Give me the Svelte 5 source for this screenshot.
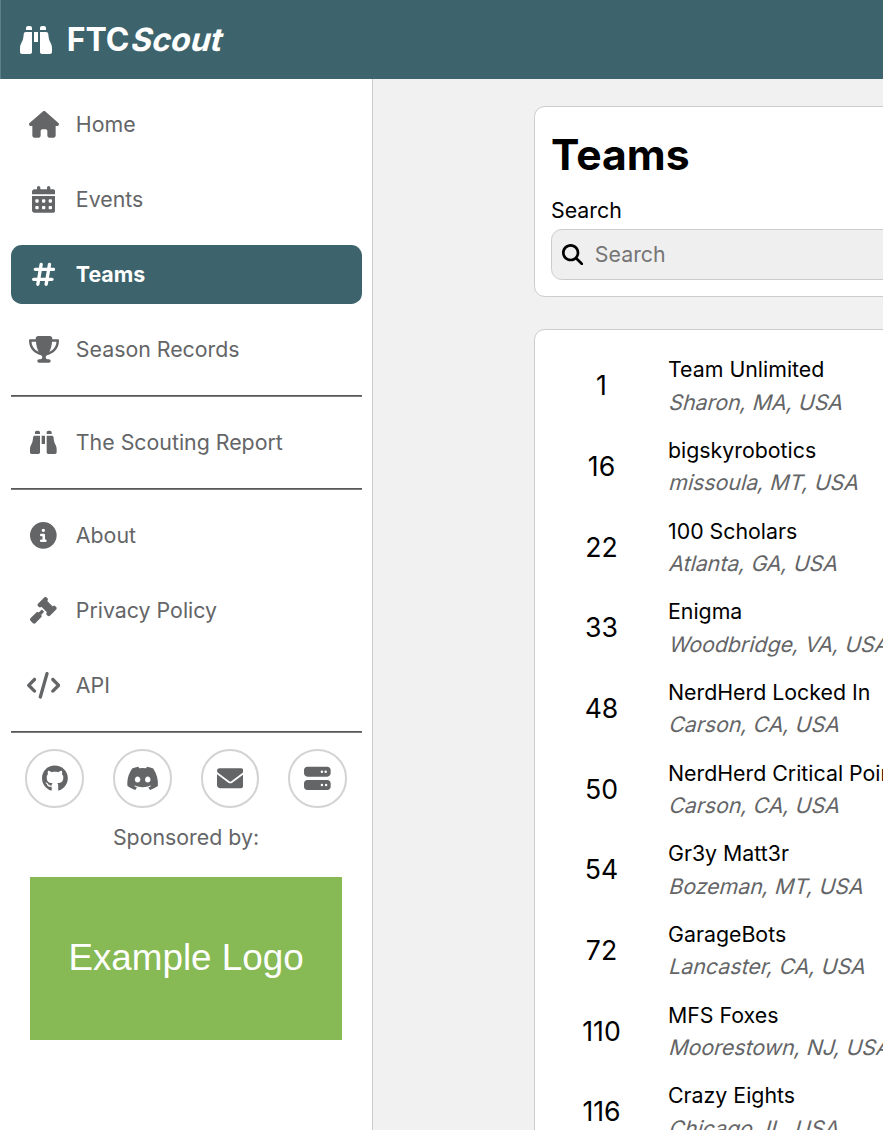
<script>
  const icons = {
    home: [576, 'M575.8 255.5c0 18-15 32.1-32 32.1h-32l.7 160.2c0 2.7-.2 5.4-.5 8.1V472c0 22.1-17.9 40-40 40H456c-1.1 0-2.2 0-3.3-.1c-1.4 .1-2.8 .1-4.2 .1H416 392c-22.1 0-40-17.9-40-40V448 384c0-17.7-14.3-32-32-32H256c-17.7 0-32 14.3-32 32v64 24c0 22.1-17.9 40-40 40H160 128.1c-1.5 0-3-.1-4.5-.2c-1.2 .1-2.4 .2-3.6 .2H104c-22.1 0-40-17.9-40-40V360c0-.9 0-1.9 .1-2.8V287.6H32c-18 0-32-14-32-32.1c0-9 3-17 10-24L266.4 8c7-7 15-8 22-8s15 2 21 7L564.8 231.5c8 7 12 15 11 24z'],
    calendar: [448, 'M128 0c17.7 0 32 14.3 32 32V64H288V32c0-17.7 14.3-32 32-32s32 14.3 32 32V64h48c26.5 0 48 21.5 48 48v48H0V112C0 85.5 21.5 64 48 64H96V32c0-17.7 14.3-32 32-32zM0 192H448V464c0 26.5-21.5 48-48 48H48c-26.5 0-48-21.5-48-48V192zm64 80v32c0 8.8 7.2 16 16 16h32c8.8 0 16-7.2 16-16V272c0-8.8-7.2-16-16-16H80c-8.8 0-16 7.2-16 16zm128 0v32c0 8.8 7.2 16 16 16h32c8.8 0 16-7.2 16-16V272c0-8.8-7.2-16-16-16H208c-8.8 0-16 7.2-16 16zm144-16c-8.8 0-16 7.2-16 16v32c0 8.8 7.2 16 16 16h32c8.8 0 16-7.2 16-16V272c0-8.8-7.2-16-16-16H336zM64 400v32c0 8.8 7.2 16 16 16h32c8.8 0 16-7.2 16-16V400c0-8.8-7.2-16-16-16H80c-8.8 0-16 7.2-16 16zm144-16c-8.8 0-16 7.2-16 16v32c0 8.8 7.2 16 16 16h32c8.8 0 16-7.2 16-16V400c0-8.8-7.2-16-16-16H208zm112 16v32c0 8.8 7.2 16 16 16h32c8.8 0 16-7.2 16-16V400c0-8.8-7.2-16-16-16H336c-8.8 0-16 7.2-16 16z'],
    hashtag: [448, 'M181.3 32.4c17.4 2.9 29.2 19.4 26.3 36.8L197.8 128h95.1l11.5-69.3c2.9-17.4 19.4-29.2 36.8-26.3s29.2 19.4 26.3 36.8L357.8 128H416c17.7 0 32 14.3 32 32s-14.3 32-32 32H347.1L325.8 320H384c17.7 0 32 14.3 32 32s-14.3 32-32 32H315.1l-11.5 69.3c-2.9 17.4-19.4 29.2-36.8 26.3s-29.2-19.4-26.3-36.8l9.8-58.7H155.1l-11.5 69.3c-2.9 17.4-19.4 29.2-36.8 26.3s-29.2-19.4-26.3-36.8L90.2 384H32c-17.7 0-32-14.3-32-32s14.3-32 32-32h68.9l21.3-128H64c-17.7 0-32-14.3-32-32s14.3-32 32-32h68.9l11.5-69.3c2.9-17.4 19.4-29.2 36.8-26.3zM187.1 192L165.8 320h95.1l21.3-128H187.1z'],
    trophy: [576, 'M400 0H176c-26.5 0-48.1 21.8-47.1 48.2c.2 5.3 .4 10.6 .7 15.8H24C10.7 64 0 74.7 0 88c0 92.6 33.5 157 78.5 200.7c44.3 43.1 98.3 64.8 138.1 75.8c23.4 6.5 39.4 26 39.4 45.6c0 20.9-17 37.9-37.9 37.9H192c-17.7 0-32 14.3-32 32s14.3 32 32 32H384c17.7 0 32-14.3 32-32s-14.3-32-32-32H357.9C337 448 320 431 320 410.1c0-19.6 15.9-39.2 39.4-45.6c39.9-11 93.9-32.7 138.2-75.8C542.5 245 576 180.6 576 88c0-13.3-10.7-24-24-24H446.4c.3-5.2 .5-10.4 .7-15.8C448.1 21.8 426.5 0 400 0zM48.9 112h84.4c9.1 90.1 29.2 150.3 51.9 190.6c-24.9-11-50.8-26.5-73.2-48.3c-32-31.1-58-76-63-142.3zM464.1 254.3c-22.4 21.8-48.3 37.3-73.2 48.3c22.7-40.3 42.8-100.5 51.9-190.6h84.4c-5.1 66.3-31.1 111.2-63 142.3z'],
    binoculars: [512, 'M128 32h32c17.7 0 32 14.3 32 32V96H96V64c0-17.7 14.3-32 32-32zm64 96V448c0 17.7-14.3 32-32 32H32c-17.7 0-32-14.3-32-32V388.9c0-34.6 9.4-68.6 27.2-98.3C40.9 267.8 49.7 242.4 53 216L60.5 156c2-16 15.6-28 31.8-28H192zm227.8 0c16.1 0 29.8 12 31.8 28L459 216c3.3 26.4 12.1 51.8 25.8 74.6c17.8 29.7 27.2 63.7 27.2 98.3V448c0 17.7-14.3 32-32 32H352c-17.7 0-32-14.3-32-32V128h99.8zM320 64c0-17.7 14.3-32 32-32h32c17.7 0 32 14.3 32 32V96H320V64zm-32 64V288H224V128h64z'],
    info: [512, 'M256 512A256 256 0 1 0 256 0a256 256 0 1 0 0 512zM216 336h24V272H216c-13.3 0-24-10.7-24-24s10.7-24 24-24h48c13.3 0 24 10.7 24 24v88h8c13.3 0 24 10.7 24 24s-10.7 24-24 24H216c-13.3 0-24-10.7-24-24s10.7-24 24-24zm40-208a32 32 0 1 1 0 64 32 32 0 1 1 0-64z'],
    gavel: [512, 'M318.6 9.4c-12.5-12.5-32.8-12.5-45.3 0l-120 120c-12.5 12.5-12.5 32.8 0 45.3l16 16c12.5 12.5 32.8 12.5 45.3 0l4-4L325.4 293.4l-4 4c-12.5 12.5-12.5 32.8 0 45.3l16 16c12.5 12.5 32.8 12.5 45.3 0l120-120c12.5-12.5 12.5-32.8 0-45.3l-16-16c-12.5-12.5-32.8-12.5-45.3 0l-4 4L330.6 74.6l4-4c12.5-12.5 12.5-32.8 0-45.3l-16-16zm-152 288c-12.5-12.5-32.8-12.5-45.3 0l-112 112c-12.5 12.5-12.5 32.8 0 45.3l48 48c12.5 12.5 32.8 12.5 45.3 0l112-112c12.5-12.5 12.5-32.8 0-45.3l-1.4-1.4L272 285.3 226.7 240 168 298.7l-1.4-1.4z'],
    code: [640, 'M392.8 1.2c-17-4.9-34.7 5-39.6 22l-128 448c-4.9 17 5 34.7 22 39.6s34.7-5 39.6-22l128-448c4.9-17-5-34.7-22-39.6zm80.6 120.1c-12.5 12.5-12.5 32.8 0 45.3L562.7 256l-89.4 89.4c-12.5 12.5-12.5 32.8 0 45.3s32.8 12.5 45.3 0l112-112c12.5-12.5 12.5-32.8 0-45.3l-112-112c-12.5-12.5-32.8-12.5-45.3 0zm-306.7 0c-12.5-12.5-32.8-12.5-45.3 0l-112 112c-12.5 12.5-12.5 32.8 0 45.3l112 112c12.5 12.5 32.8 12.5 45.3 0s12.5-32.8 0-45.3L77.3 256l89.4-89.4c12.5-12.5 12.5-32.8 0-45.3z'],
    github: [496, 'M165.9 397.4c0 2-2.3 3.6-5.2 3.6-3.3.3-5.6-1.3-5.6-3.6 0-2 2.3-3.6 5.2-3.6 3-.3 5.6 1.3 5.6 3.6zm-31.1-4.5c-.7 2 1.3 4.3 4.3 4.9 2.6 1 5.6 0 6.2-2s-1.3-4.3-4.3-5.2c-2.6-.7-5.5.3-6.2 2.3zm44.2-1.7c-2.9.7-4.9 2.6-4.6 4.9.3 2 2.9 3.3 5.9 2.6 2.9-.7 4.9-2.6 4.6-4.6-.3-1.9-3-3.2-5.9-2.9zM244.8 8C106.1 8 0 113.3 0 252c0 110.9 69.8 205.8 169.5 239.2 12.8 2.3 17.3-5.6 17.3-12.1 0-6.2-.3-40.4-.3-61.4 0 0-70 15-84.7-29.8 0 0-11.4-29.1-27.8-36.6 0 0-22.9-15.7 1.6-15.4 0 0 24.9 2 38.6 25.8 21.9 38.6 58.6 27.5 72.9 20.9 2.3-16 8.8-27.1 16-33.7-55.9-6.2-112.3-14.3-112.3-110.5 0-27.5 7.6-41.3 23.6-58.9-2.6-6.5-11.1-33.3 2.6-67.9 20.9-6.5 69 27 69 27 20-5.6 41.5-8.5 62.8-8.5s42.8 2.9 62.8 8.5c0 0 48.1-33.6 69-27 13.7 34.7 5.2 61.4 2.6 67.9 16 17.7 25.8 31.5 25.8 58.9 0 96.5-58.9 104.2-114.8 110.5 9.2 7.9 17 22.9 17 46.4 0 33.7-.3 75.4-.3 83.6 0 6.5 4.6 14.4 17.3 12.1C428.2 457.8 496 362.9 496 252 496 113.3 383.5 8 244.8 8z'],
    discord: [640, 'M524.531,69.836a1.5,1.5,0,0,0-.764-.7A485.065,485.065,0,0,0,404.081,32.03a1.816,1.816,0,0,0-1.923.91,337.461,337.461,0,0,0-14.9,30.6,447.848,447.848,0,0,0-134.426,0,309.541,309.541,0,0,0-15.135-30.6,1.89,1.89,0,0,0-1.924-.91A483.689,483.689,0,0,0,116.085,69.137a1.712,1.712,0,0,0-.788.676C39.068,183.651,18.186,294.69,28.43,404.354a2.016,2.016,0,0,0,.765,1.375A487.666,487.666,0,0,0,176.02,479.918a1.9,1.9,0,0,0,2.063-.676A348.2,348.2,0,0,0,208.12,430.4a1.86,1.86,0,0,0-1.019-2.588,321.173,321.173,0,0,1-45.868-21.853,1.885,1.885,0,0,1-.185-3.126c3.082-2.309,6.166-4.711,9.109-7.137a1.819,1.819,0,0,1,1.9-.256c96.229,43.917,200.41,43.917,295.5,0a1.812,1.812,0,0,1,1.924.233c2.944,2.426,6.027,4.851,9.132,7.16a1.884,1.884,0,0,1-.162,3.126,301.407,301.407,0,0,1-45.89,21.83,1.875,1.875,0,0,0-1,2.611,391.055,391.055,0,0,0,30.014,48.815,1.864,1.864,0,0,0,2.063.7A486.048,486.048,0,0,0,610.7,405.729a1.882,1.882,0,0,0,.765-1.352C623.729,277.594,590.933,167.465,524.531,69.836ZM222.491,337.58c-28.972,0-52.844-26.587-52.844-59.239S193.056,219.1,222.491,219.1c29.665,0,53.306,26.82,52.843,59.239C275.334,310.993,251.924,337.58,222.491,337.58Zm195.38,0c-28.971,0-52.843-26.587-52.843-59.239S388.437,219.1,417.871,219.1c29.667,0,53.307,26.82,52.844,59.239C470.715,310.993,447.538,337.58,417.871,337.58Z'],
    envelope: [512, 'M48 64C21.5 64 0 85.5 0 112c0 15.1 7.1 29.3 19.2 38.4L236.8 313.6c11.4 8.5 27 8.5 38.4 0L492.8 150.4c12.1-9.1 19.2-23.3 19.2-38.4c0-26.5-21.5-48-48-48H48zM0 176V384c0 35.3 28.7 64 64 64H448c35.3 0 64-28.7 64-64V176L294.4 339.2c-22.8 17.1-54 17.1-76.8 0L0 176z'],
    server: [512, 'M64 32C28.7 32 0 60.7 0 96v64c0 35.3 28.7 64 64 64H448c35.3 0 64-28.7 64-64V96c0-35.3-28.7-64-64-64H64zm280 72a24 24 0 1 1 0 48 24 24 0 1 1 0-48zm48 24a24 24 0 1 1 48 0 24 24 0 1 1 -48 0zM64 288c-35.3 0-64 28.7-64 64v64c0 35.3 28.7 64 64 64H448c35.3 0 64-28.7 64-64V352c0-35.3-28.7-64-64-64H64zm280 72a24 24 0 1 1 0 48 24 24 0 1 1 0-48zm56 24a24 24 0 1 1 48 0 24 24 0 1 1 -48 0z'],
    search: [512, 'M416 208c0 45.9-14.9 88.3-40 122.7L502.6 457.4c12.5 12.5 12.5 32.8 0 45.3s-32.8 12.5-45.3 0L330.7 376c-34.4 25.2-76.8 40-122.7 40C93.1 416 0 322.9 0 208S93.1 0 208 0S416 93.1 416 208zM208 352a144 144 0 1 0 0-288 144 144 0 1 0 0 288z'],
  };

  const groups = [
    [
      ['home', 'Home'],
      ['calendar', 'Events'],
      ['hashtag', 'Teams', true],
      ['trophy', 'Season Records'],
    ],
    [['binoculars', 'The Scouting Report']],
    [
      ['info', 'About'],
      ['gavel', 'Privacy Policy'],
      ['code', 'API'],
    ],
  ];

  const socials = ['github', 'discord', 'envelope', 'server'];

  const teams = [
    [1, 'Team Unlimited', 'Sharon, MA, USA'],
    [16, 'bigskyrobotics', 'missoula, MT, USA'],
    [22, '100 Scholars', 'Atlanta, GA, USA'],
    [33, 'Enigma', 'Woodbridge, VA, USA'],
    [48, 'NerdHerd Locked In', 'Carson, CA, USA'],
    [50, 'NerdHerd Critical Point', 'Carson, CA, USA'],
    [54, 'Gr3y Matt3r', 'Bozeman, MT, USA'],
    [72, 'GarageBots', 'Lancaster, CA, USA'],
    [110, 'MFS Foxes', 'Moorestown, NJ, USA'],
    [116, 'Crazy Eights', 'Chicago, IL, USA'],
  ];
</script>

{#snippet icon(name, size)}
  <svg viewBox="0 0 {icons[name][0]} 512" width={(icons[name][0] / 512) * size} height={size} fill="currentColor" aria-hidden="true">
    <path d={icons[name][1]} />
  </svg>
{/snippet}

<div class="app">
  <header>
    {@render icon('binoculars', 32)}
    <div class="brand">FTC<em>Scout</em></div>
  </header>
  <div class="body">
    <nav>
      {#each groups as group}
        {#each group as [name, label, active]}
          <a class="link" class:active href="#top">
            <span class="slot">{@render icon(name, 26.67)}</span>
            <span class="label">{label}</span>
          </a>
        {/each}
        <div class="rule"></div>
      {/each}
      <div class="socials">
        {#each socials as name}
          <a class="social" href="#top" aria-label={name}>{@render icon(name, 26.67)}</a>
        {/each}
      </div>
      <p class="sponsor">Sponsored by:</p>
      <div class="logo">Example Logo</div>
    </nav>
    <main>
      <section class="card top">
        <h1>Teams</h1>
        <label for="q">Search</label>
        <div class="field">
          {@render icon('search', 21.33)}
          <input id="q" placeholder="Search" />
        </div>
      </section>
      <section class="card list">
        {#each teams as [number, name, place]}
          <a class="team" href="#top">
            <span class="number">{number}</span>
            <span class="info">
              <span>{name}</span>
              <em>{place}</em>
            </span>
          </a>
        {/each}
      </section>
    </main>
  </div>
</div>

<style>
  :global(body) {
    overflow: hidden;
  }
  .app {
    height: 1130px;
    overflow: hidden;
    display: flex;
    flex-direction: column;
    font-family: Inter, sans-serif;
    font-size: 21.33px;
    line-height: 26px;
    color: #000;
    background: #f1f1f1;
  }
  .app * {
    box-sizing: border-box;
  }
  svg {
    display: block;
    flex: none;
  }
  a {
    color: inherit;
    text-decoration: none;
  }
  /* Slanted upright letterforms instead of the cursive italic cut */
  em {
    display: inline-block;
    font-style: normal;
    transform: skewX(-15deg);
    transform-origin: 0 80%;
  }
  header {
    height: 79px;
    flex: none;
    display: flex;
    align-items: center;
    gap: 14.67px;
    padding-left: 20px;
    background: #3d646c;
    box-shadow: inset 1px 0 #5d7f86;
    color: #fff;
  }
  .brand {
    font-size: 32px;
    font-weight: 750;
    line-height: 40px;
  }
  .body {
    flex: 1;
    min-height: 0;
    display: flex;
  }
  nav {
    width: 373px;
    flex: none;
    display: flex;
    flex-direction: column;
    gap: 16px;
    padding: 16px 10px 0 11px;
    background: #fff;
    border-right: 1px solid #ccc;
    color: #646567;
  }
  .link {
    height: 59px;
    flex: none;
    display: flex;
    align-items: center;
    gap: 15.5px;
    padding-left: 16px;
    border-radius: 10.67px;
  }
  .slot {
    width: 33.33px;
    display: flex;
    justify-content: center;
  }
  .label {
    padding-bottom: 2px;
  }
  .active {
    background: #3d646c;
    color: #fff;
    font-weight: 700;
  }
  .rule {
    height: 2px;
    flex: none;
    background: #7c7c7e;
    border-top: 1px solid #58595b;
  }
  .socials {
    display: flex;
    justify-content: space-around;
    margin-right: 0.6px;
  }
  .social {
    width: 58.67px;
    height: 58.67px;
    display: flex;
    align-items: center;
    justify-content: center;
    border: 2px solid #d3d3d3;
    border-radius: 50%;
  }
  .sponsor {
    margin: 0 1px 11px 0;
    text-align: center;
  }
  .logo {
    width: 312px;
    height: 163px;
    align-self: center;
    margin-right: 1px;
    display: flex;
    align-items: center;
    justify-content: center;
    background: #87ba55;
    color: #fff;
    font: 36.8px 'Liberation Sans', sans-serif;
  }
  main {
    flex: 1;
    min-width: 0;
    padding: 27px 0 0 161px;
    display: flex;
    flex-direction: column;
    gap: 32px;
  }
  .card {
    width: 700px;
    flex: none;
    background: #fff;
    border: 1px solid #ccc;
    border-radius: 10.67px;
  }
  .top {
    height: 191px;
    padding: 22px 16px 16px;
    display: flex;
    flex-direction: column;
  }
  h1 {
    margin: 0;
    font-size: 42.67px;
    font-weight: 700;
    line-height: 52px;
  }
  label {
    margin-top: auto;
    margin-bottom: 6px;
  }
  .field {
    height: 51px;
    flex: none;
    display: flex;
    align-items: center;
    gap: 11.5px;
    padding-left: 10px;
    background: #efefef;
    border: 1px solid #ccc;
    border-radius: 10.67px;
  }
  input {
    flex: 1;
    padding: 0 0 2px;
    border: 0;
    outline: 0;
    background: none;
    font: inherit;
  }
  input::placeholder {
    color: #757575;
    opacity: 1;
  }
  .list {
    padding: 15.33px 16px 0;
  }
  .team {
    height: 80.67px;
    display: flex;
    align-items: center;
  }
  .number {
    width: 101px;
    padding-bottom: 0.8px;
    text-align: center;
    font-size: 26.67px;
    line-height: 32px;
  }
  .info {
    display: flex;
    flex-direction: column;
    gap: 6.33px;
    padding-left: 16px;
    white-space: nowrap;
  }
  .info em {
    color: #646567;
  }
</style>
